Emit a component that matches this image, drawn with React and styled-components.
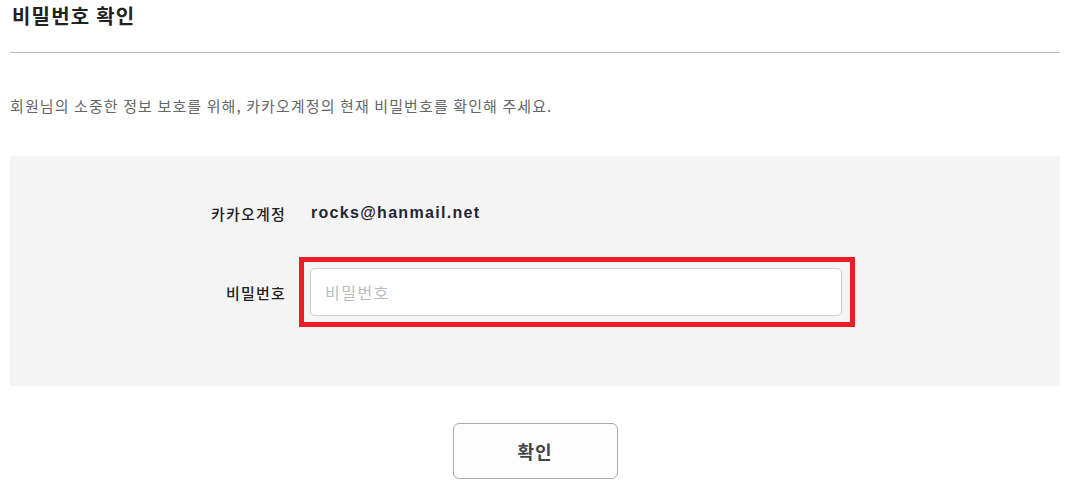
import styled, { createGlobalStyle } from "styled-components";

const GlobalStyle = createGlobalStyle`
  body {
    margin: 0;
    background: #fff;
    font-family: "Noto Sans CJK KR", "Noto Sans", sans-serif;
    color: #222;
  }
`;

const Page = styled.main`
  width: 1050px;
  padding: 0 7px 0 10px;
`;

const Title = styled.h1`
  margin: 0;
  padding-left: 2px;
  font-size: 20px;
  line-height: 32px;
  font-weight: 700;
  letter-spacing: 1.2px;
  color: #222;
`;

const Divider = styled.hr`
  margin: 20px 0 0;
  border: 0;
  border-top: 1px solid #bbb;
`;

const Notice = styled.p`
  margin: 43px 0 0;
  font-size: 15px;
  line-height: 20px;
  letter-spacing: 1.1px;
  color: #666;
`;

const Panel = styled.section`
  margin-top: 40px;
  height: 230px;
  box-sizing: border-box;
  padding: 37px 0 0;
  background: #f4f4f4;
  display: grid;
  grid-template-columns: 275px 1fr;
  grid-template-rows: 40px 70px;
  column-gap: 14px;
  row-gap: 24px;
  align-items: center;
`;

const Label = styled.label`
  justify-self: end;
  margin-right: -1px;
  font-size: 15px;
  font-weight: 500;
  letter-spacing: 1.2px;
  color: #222;
`;

const Account = styled.span`
  padding-left: 12px;
  font-family: "Liberation Sans", Arial, sans-serif;
  font-size: 16px;
  font-weight: 700;
  letter-spacing: 1.3px;
  color: #1f2533;
`;

const Highlight = styled.div`
  justify-self: start;
  width: 556px;
  box-sizing: border-box;
  border: 5px solid #ed1c24;
  padding: 6px 8px 6px 6px;
`;

const Input = styled.input`
  display: block;
  width: 100%;
  height: 48px;
  box-sizing: border-box;
  border: 1px solid #cfcfcf;
  border-radius: 5px;
  background: #fff;
  padding: 0 14px;
  font-family: "Noto Sans CJK KR", sans-serif;
  font-size: 16px;
  letter-spacing: 1.5px;
  color: #222;
  outline: none;

  &::placeholder {
    color: #bbb;
  }
`;

const Actions = styled.div`
  display: flex;
  justify-content: center;
  margin-top: 37px;
`;

const Button = styled.button`
  width: 165px;
  height: 56px;
  border: 1px solid #aaa;
  border-radius: 6px;
  background: #fdfdfd;
  font-family: "Noto Sans CJK KR", sans-serif;
  font-size: 18px;
  font-weight: 700;
  letter-spacing: 1px;
  color: #444;
  cursor: pointer;
`;

const App = () => {
  return (
    <>
      <GlobalStyle />
      <Page>
        <Title>비밀번호 확인</Title>
        <Divider />
        <Notice>
          회원님의 소중한 정보 보호를 위해, 카카오계정의 현재 비밀번호를 확인해 주세요.
        </Notice>

        <Panel>
          <Label>카카오계정</Label>
          <Account>rocks@hanmail.net</Account>

          <Label htmlFor="pw">비밀번호</Label>
          <Highlight>
            <Input id="pw" type="password" placeholder="비밀번호" />
          </Highlight>
        </Panel>

        <Actions>
          <Button>확인</Button>
        </Actions>
      </Page>
    </>
  );
};

export default App;
